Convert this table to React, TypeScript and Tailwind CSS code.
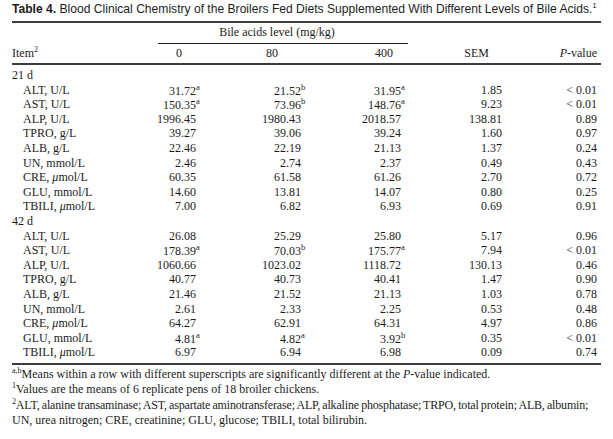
import React from "react";

type Cell = { v: string; s?: string };
type Row = { item: React.ReactNode; cells: Cell[]; sem: string; p: string };

const mu = <i>μ</i>;

const c = (v: string, s?: string): Cell => ({ v, s });

const day21: Row[] = [
  { item: "ALT, U/L", cells: [c("31.72", "a"), c("21.52", "b"), c("31.95", "a")], sem: "1.85", p: "< 0.01" },
  { item: "AST, U/L", cells: [c("150.35", "a"), c("73.96", "b"), c("148.76", "a")], sem: "9.23", p: "< 0.01" },
  { item: "ALP, U/L", cells: [c("1996.45"), c("1980.43"), c("2018.57")], sem: "138.81", p: "0.89" },
  { item: "TPRO, g/L", cells: [c("39.27"), c("39.06"), c("39.24")], sem: "1.60", p: "0.97" },
  { item: "ALB, g/L", cells: [c("22.46"), c("22.19"), c("21.13")], sem: "1.37", p: "0.24" },
  { item: "UN, mmol/L", cells: [c("2.46"), c("2.74"), c("2.37")], sem: "0.49", p: "0.43" },
  { item: <>CRE, {mu}mol/L</>, cells: [c("60.35"), c("61.58"), c("61.26")], sem: "2.70", p: "0.72" },
  { item: "GLU, mmol/L", cells: [c("14.60"), c("13.81"), c("14.07")], sem: "0.80", p: "0.25" },
  { item: <>TBILI, {mu}mol/L</>, cells: [c("7.00"), c("6.82"), c("6.93")], sem: "0.69", p: "0.91" },
];

const day42: Row[] = [
  { item: "ALT, U/L", cells: [c("26.08"), c("25.29"), c("25.80")], sem: "5.17", p: "0.96" },
  { item: "AST, U/L", cells: [c("178.39", "a"), c("70.03", "b"), c("175.77", "a")], sem: "7.94", p: "< 0.01" },
  { item: "ALP, U/L", cells: [c("1060.66"), c("1023.02"), c("1118.72")], sem: "130.13", p: "0.46" },
  { item: "TPRO, g/L", cells: [c("40.77"), c("40.73"), c("40.41")], sem: "1.47", p: "0.90" },
  { item: "ALB, g/L", cells: [c("21.46"), c("21.52"), c("21.13")], sem: "1.03", p: "0.78" },
  { item: "UN, mmol/L", cells: [c("2.61"), c("2.33"), c("2.25")], sem: "0.53", p: "0.48" },
  { item: <>CRE, {mu}mol/L</>, cells: [c("64.27"), c("62.91"), c("64.31")], sem: "4.97", p: "0.86" },
  { item: "GLU, mmol/L", cells: [c("4.81", "a"), c("4.82", "a"), c("3.92", "b")], sem: "0.35", p: "< 0.01" },
  { item: <>TBILI, {mu}mol/L</>, cells: [c("6.97"), c("6.94"), c("6.98")], sem: "0.09", p: "0.74" },
];

const grid = "grid grid-cols-[128px_56px_105px_100px_101px_96px]";

function Num({ cell }: { cell: Cell }) {
  return (
    <div className="text-right whitespace-nowrap">
      {cell.v}
      {cell.s && (
        <span className="inline-block w-0 text-left text-[8.5px] leading-none align-[5px]">{cell.s}</span>
      )}
    </div>
  );
}

function DataRow({ row }: { row: Row }) {
  return (
    <div className={`${grid} h-[14.6px] leading-[14.6px]`}>
      <div className="pl-[11px] whitespace-nowrap">{row.item}</div>
      {row.cells.map((cell, i) => (
        <Num key={i} cell={cell} />
      ))}
      <div className="text-right">{row.sem}</div>
      <div className="text-right pr-[1px]">{row.p}</div>
    </div>
  );
}

function Section({ label, rows }: { label: string; rows: Row[] }) {
  return (
    <>
      <div className="h-[14.6px] leading-[14.6px]">{label}</div>
      {rows.map((r, i) => (
        <DataRow key={i} row={r} />
      ))}
    </>
  );
}

export default function App() {
  return (
    <div className="w-[613px] h-[439px] bg-white text-[#1c1c1c] px-[12px] overflow-hidden">
      <div className="h-[18px] leading-[18px] text-[12.1px] whitespace-nowrap font-['Liberation_Sans',Arial,sans-serif]">
        <span className="font-bold">Table 4.</span> Blood Clinical Chemistry of the Broilers Fed Diets Supplemented
        With Different Levels of Bile Acids.<span className="text-[8px] align-[5px] leading-none">1</span>
      </div>
      <div className="mt-[3px] h-[2px] bg-[#3c3c3c]" />
      <div className="font-['Liberation_Serif','Times_New_Roman',serif] text-[12px]">
        <div className="ml-[146px] w-[250px] h-[21px] leading-[18px] border-b border-[#222] text-center pr-[12px]">
          Bile acids level (mg/kg)
        </div>
        <div className={`${grid} h-[21px] leading-[19px] border-b-2 border-[#3c3c3c]`}>
          <div>
            Item<span className="text-[8px] align-[5px] leading-none">2</span>
          </div>
          <div className="text-right pr-[14px]">0</div>
          <div className="text-right pr-[23px]">80</div>
          <div className="text-right pr-[8px]">400</div>
          <div className="text-right pr-[13px]">SEM</div>
          <div className="text-right pr-[1px]">
            <i>P</i>-value
          </div>
        </div>
        <div className="pt-[3px] pb-[3px] border-b-2 border-[#3c3c3c]">
          <Section label="21 d" rows={day21} />
          <Section label="42 d" rows={day42} />
        </div>
        <div className="pt-[2px] leading-[15.4px] whitespace-nowrap">
          <div>
            <span className="text-[8px] align-[5px] leading-none">a,b</span>Means within a row with different
            superscripts are significantly different at the <i>P</i>-value indicated.
          </div>
          <div>
            <span className="text-[8px] align-[5px] leading-none">1</span>Values are the means of 6 replicate pens of
            18 broiler chickens.
          </div>
          <div className="tracking-[-0.17px] [word-spacing:-0.6px]">
            <span className="text-[8px] align-[5px] leading-none">2</span>ALT, alanine transaminase; AST, aspartate
            aminotransferase; ALP, alkaline phosphatase; TRPO, total protein; ALB, albumin;
          </div>
          <div>UN, urea nitrogen; CRE, creatinine; GLU, glucose; TBILI, total bilirubin.</div>
        </div>
      </div>
    </div>
  );
}
